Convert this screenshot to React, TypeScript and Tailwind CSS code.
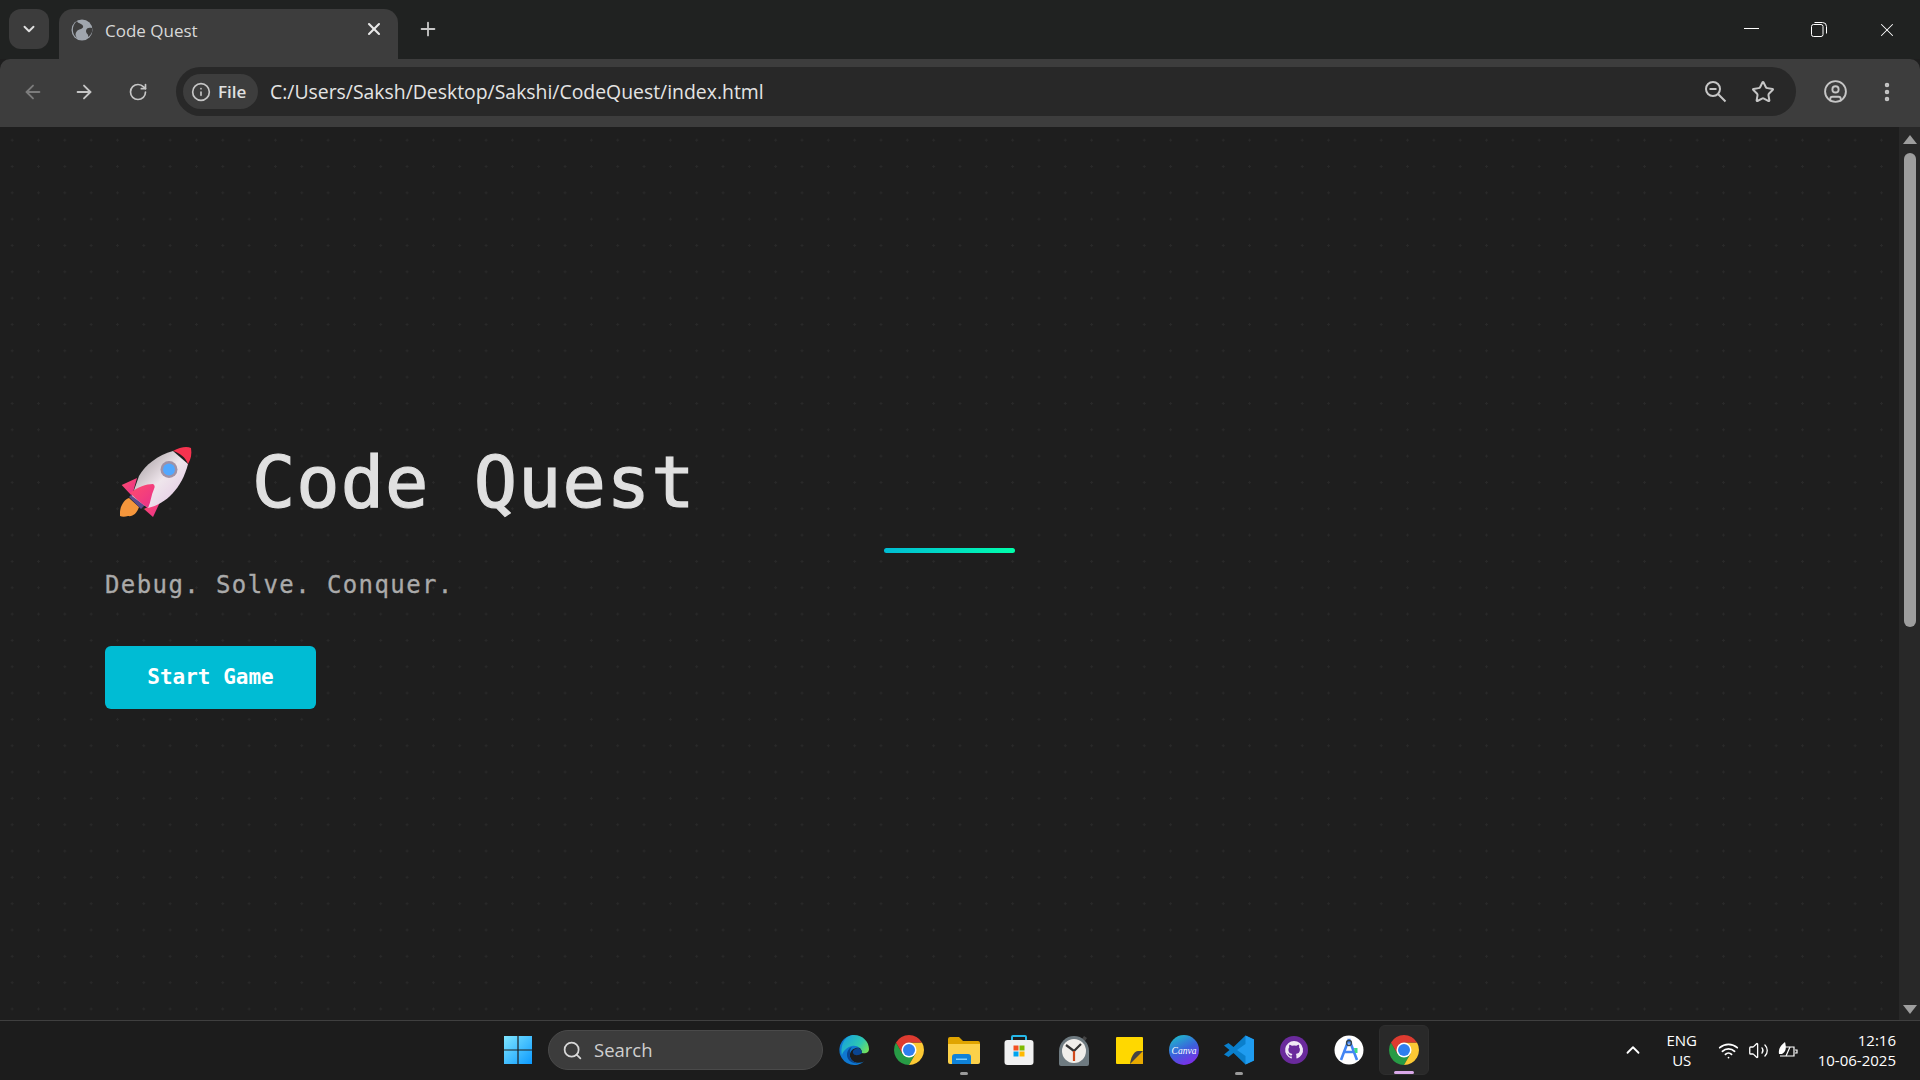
import type { ReactNode } from "react";
import {
  ArrowLeft,
  ArrowRight,
  ChevronDown,
  ChevronUp,
  CircleUser,
  EllipsisVertical,
  Info,
  Plus,
  RotateCw,
  Search,
  Star,
  Volume2,
  Wifi,
  X,
} from "lucide-react";

const UI_FONT = "font-['Open_Sans','Noto_Sans',sans-serif]";
const MONO_FONT = "font-['DejaVu_Sans_Mono','Liberation_Mono',monospace]";

function Rocket() {
  return (
    <svg width="72" height="72" viewBox="0 0 72 72" className="shrink-0">
      <defs>
        <linearGradient id="body" x1="0.2" y1="0.2" x2="0.9" y2="0.9">
          <stop offset="0" stopColor="#b8b0b4" />
          <stop offset="0.45" stopColor="#efe6ec" />
          <stop offset="1" stopColor="#e4c8e4" />
        </linearGradient>
        <linearGradient id="fin" x1="0" y1="0" x2="1" y2="1">
          <stop offset="0" stopColor="#ff4d6d" />
          <stop offset="1" stopColor="#e8308c" />
        </linearGradient>
      </defs>
      <path d="M1.7 39 L17 32 L12 50 Z" fill="url(#fin)" />
      <path d="M33 71 L41 54 L24 63 Z" fill="url(#fin)" />
      <path d="M0 70 C-1 60 5 53 9 52 L19 61 C17 67 13 71 8 70 C5 71 2 71 0 70 Z" fill="#f5963c" />
      <path d="M9 51 L13 47 L26 58 L21 63 Z" fill="#5b4a8c" />
      <path d="M53 5 C38 9 25 19 19 30 L12 50 L28 62 C46 58 62 42 68 18 Z" fill="url(#body)" />
      <path d="M53 5 C60 1 67 0 71 2 C72 8 71 13 68 18 C65 11 60 7 53 5 Z" fill="#f6334f" />
      <path d="M10 47 C18 41 26 38 33 38 C35 39 35 41 34 43 C31 49 31 56 28 62 C22 58 15 52 10 47 Z" fill="url(#fin)" />
      <circle cx="49" cy="23.5" r="8.5" fill="#a092a6" />
      <circle cx="49" cy="23.5" r="6" fill="#52a8ff" />
    </svg>
  );
}

function ChromeLogo() {
  return (
    <svg width="30" height="30" viewBox="4 4 40 40">
      <path d="M6.68 14A20 20 0 0 0 24 44L32.66 29 15.34 29Z" fill="#279b45" />
      <path d="M41.32 14A20 20 0 0 1 24 44L32.66 29 24 14Z" fill="#fcc934" />
      <path d="M6.68 14A20 20 0 0 1 41.32 14H24L15.34 29Z" fill="#dd3b30" />
      <circle cx="24" cy="24" r="10" fill="#fff" />
      <circle cx="24" cy="24" r="8" fill="#2f7fee" />
    </svg>
  );
}

function WindowsLogo() {
  return (
    <svg width="30" height="30" viewBox="0 0 30 30">
      <defs>
        <linearGradient id="win" x1="0" y1="0" x2="1" y2="1">
          <stop offset="0" stopColor="#7fe6ff" />
          <stop offset="1" stopColor="#0c9aff" />
        </linearGradient>
      </defs>
      <path d="M1 1h13.4v13.4H1zM15.6 1H29v13.4H15.6zM1 15.6h13.4V29H1zM15.6 15.6H29V29H15.6z" fill="url(#win)" />
    </svg>
  );
}

function EdgeLogo() {
  return (
    <svg width="30" height="30" viewBox="0 0 30 30">
      <defs>
        <linearGradient id="edgeA" x1="0.1" y1="0.2" x2="1" y2="0.7">
          <stop offset="0" stopColor="#1aa6d8" />
          <stop offset="0.6" stopColor="#2fc8b0" />
          <stop offset="1" stopColor="#74e05c" />
        </linearGradient>
      </defs>
      <path d="M15 0A15 15 0 1 0 25 26.500C18 30 10 26 11 19C12 14 17 12 21 13L15 0Z" fill="#0f78d0" />
      <path d="M15 0C24 0 30 7 30 14C30 18 26 19 23 18C23 13 18 10 13 11C8 12 4 16 3 20C1 10 6 0 15 0Z" fill="url(#edgeA)" />
      <path d="M23 18C20 21 15 21 14 18C13 15 17 13 20 13C22 14 23 16 23 18ZM11 19C10 24 14 27 19 28.500C13 29 8 25 8 20C8 16 10 13 13 12C11 14 11 16 11 19Z" fill="#0a4590" />
    </svg>
  );
}

function FolderLogo() {
  return (
    <svg width="32" height="30" viewBox="0 0 32 30">
      <path d="M0 4a2 2 0 0 1 2-2h9l4 4h15a2 2 0 0 1 2 2v4H0Z" fill="#e0a400" />
      <path d="M0 9h32v18a2 2 0 0 1-2 2H2a2 2 0 0 1-2-2Z" fill="#fcd14a" />
      <path d="M4 22a3 3 0 0 1 3-3h13a3 3 0 0 1 3 3v7H4Z" fill="#0f82d8" />
      <path d="M8 23.5h11v1.5H8z" fill="#7fd0ff" />
    </svg>
  );
}

function StoreLogo() {
  return (
    <svg width="30" height="30" viewBox="0 0 30 30">
      <path d="M8 5V2a1 1 0 0 1 1-1h12a1 1 0 0 1 1 1v3" fill="none" stroke="#26b8e8" strokeWidth="2" />
      <rect x="0.5" y="5" width="29" height="25" rx="3" fill="#f1f1f1" />
      <path d="M9.5 10.5h5v5h-5z" fill="#f25022" />
      <path d="M15.5 10.5h5v5h-5z" fill="#7fba00" />
      <path d="M9.5 16.5h5v5h-5z" fill="#00a4ef" />
      <path d="M15.5 16.5h5v5h-5z" fill="#ffb900" />
    </svg>
  );
}

function ClockLogo() {
  return (
    <svg width="30" height="31" viewBox="0 0 30 31">
      <path d="M25 1l3 2-2 3-3-2Z" fill="#444" />
      <path d="M0 16a15 15 0 0 1 30 0v13a2 2 0 0 1-2 2H2a2 2 0 0 1-2-2Z" fill="#6e7a80" />
      <circle cx="15" cy="16" r="12" fill="#f0eeea" />
      <path d="M15 16L7 10M15 16L22 9" stroke="#333" strokeWidth="2.2" />
      <path d="M15 16v10" stroke="#d04a1c" strokeWidth="2.2" />
    </svg>
  );
}

function StickyLogo() {
  return (
    <svg width="27" height="27" viewBox="0 0 27 27">
      <path d="M1 0h25a1 1 0 0 1 1 1v25a1 1 0 0 1-1 1H1a1 1 0 0 1-1-1V1a1 1 0 0 1 1-1Z" fill="#ffd800" />
      <path d="M14 27c1-6 3-12 8-13h5v12a1 1 0 0 1-1 1Z" fill="#e8aa00" />
      <path d="M14 27c1-6 3-12 8-13h5Z" fill="#444" />
    </svg>
  );
}

function CanvaLogo() {
  return (
    <svg width="30" height="30" viewBox="0 0 30 30">
      <defs>
        <linearGradient id="canva" x1="0.1" y1="0" x2="0.6" y2="1">
          <stop offset="0" stopColor="#1cc4c9" />
          <stop offset="0.55" stopColor="#3b62dc" />
          <stop offset="1" stopColor="#7b2fe8" />
        </linearGradient>
      </defs>
      <circle cx="15" cy="15" r="15" fill="url(#canva)" />
      <text x="15" y="18.5" textAnchor="middle" fontSize="9.5" fontStyle="italic" fontFamily="Liberation Serif, serif" fill="#fff">
        Canva
      </text>
    </svg>
  );
}

function VsCodeLogo() {
  return (
    <svg width="30" height="30" viewBox="0 0 30 30">
      <path d="M21.5 0.5L30 4.5v21l-8.500 4-12-11.500-5 4L0 19.500 5.500 15 0 10.500l4.500-2.500 5 4Z" fill="#0a7fcc" />
      <path d="M21.500 0.500L30 4.500v21l-8.500 4V21L13 15l8.500-6Z" fill="#1f9cf0" />
    </svg>
  );
}

function GithubLogo() {
  return (
    <svg width="28" height="28" viewBox="0 0 28 28">
      <circle cx="14" cy="14" r="14" fill="#6a2a9c" />
      <path
        d="M14 5a9 9 0 0 0-2.800 17.500c.4.100.6-.2.600-.4v-1.600c-2.500.5-3-1.100-3-1.100-.4-1-1-1.300-1-1.300-.8-.6.100-.6.100-.6.900.100 1.400.9 1.400.9.800 1.400 2.100 1 2.600.8.100-.6.300-1 .6-1.200-2-.2-4.100-1-4.100-4.400 0-1 .3-1.800.9-2.400-.1-.2-.4-1.100.100-2.400 0 0 .8-.2 2.500.9a8.700 8.700 0 0 1 4.500 0c1.700-1.100 2.500-.9 2.500-.9.500 1.300.2 2.200.1 2.400.6.600.9 1.400.9 2.400 0 3.400-2.100 4.200-4.100 4.400.3.300.6.800.6 1.700v2.400c0 .2.200.5.600.4A9 9 0 0 0 14 5Z"
        fill="#f0e8f6"
      />
    </svg>
  );
}

function StudioLogo() {
  return (
    <svg width="30" height="30" viewBox="0 0 30 30">
      <circle cx="15" cy="15" r="14.500" fill="#fff" />
      <path d="M15 4L7 25M15 4l8 21M9 17h12" stroke="#4285f4" strokeWidth="2.600" fill="none" />
      <circle cx="15" cy="8" r="2.500" fill="none" stroke="#37474f" strokeWidth="1.300" />
      <path d="M20 13h3.500v5H21Z" fill="#3ddc84" />
    </svg>
  );
}

function BatteryLeaf() {
  return (
    <svg width="20" height="20" viewBox="0 0 20 20" fill="none" stroke="#fff" strokeWidth="1.200">
      <path d="M5 7h11v9H2" />
      <path d="M17 10h2v3h-2" />
      <path d="M1 14c-1-5 2-9 6-12 1 4 2 9-3 12Z" fill="#fff" stroke="none" />
      <path d="M8 16l4-9" />
    </svg>
  );
}

function TaskIcon({ children, mark }: { children: ReactNode; mark?: boolean }) {
  return (
    <div className="relative flex h-[50px] w-[50px] items-center justify-center">
      {children}
      {mark && <div className="absolute bottom-0 left-[21px] h-[3px] w-[8px] rounded-full bg-[#9a9a9a]" />}
    </div>
  );
}

function BrowserChrome() {
  return (
    <>
      <div className="flex h-[59px] items-start bg-[#202221] pt-[9px] pl-[9px] text-[#e0e0e0]">
        <div className="flex h-[40px] w-[40px] items-center justify-center rounded-[12px] bg-[#3c3c3c]">
          <ChevronDown size={18} strokeWidth={2.500} />
        </div>
        <div className="ml-[10px] flex h-[50px] w-[339px] items-start rounded-t-[14px] bg-[#3d3d3d] pt-[10px] pr-[14px] pl-[12px]">
          <svg width="22" height="22" viewBox="0 0 22 22" className="shrink-0">
            <circle cx="11" cy="11" r="10.500" fill="#a0a6ae" />
            <path d="M6 2c1 3 5 2 6 5s-4 3-6 5-2 5 0 7C1 16 0 7 6 2ZM21 9c-3-1-6 0-6 3s3 3 2 6c3-2 5-5 4-9Z" fill="#3d3d3d" />
          </svg>
          <span className={`${UI_FONT} ml-[12px] text-[17px] leading-[24px] text-[#d8d8d8]`}>Code Quest</span>
          <X size={20} strokeWidth={2.500} className="ml-auto text-[#e8e8e8]" />
        </div>
        <Plus size={22} strokeWidth={2} className="ml-[19px] mt-[9px] text-[#c8c8c8]" />
        <div className="ml-auto flex items-start pt-[12px] pr-[22px] text-white">
          <div className="mt-[7px] h-px w-[15px] bg-white" />
          <svg width="16" height="16" viewBox="0 0 16 16" fill="none" stroke="#fff" className="ml-[52px]">
            <rect x="0.500" y="3.500" width="11.500" height="12" rx="2" />
            <path d="M3.500 1.500h8a4 4 0 0 1 4 4v7" />
          </svg>
          <X size={22} strokeWidth={1.100} className="ml-[49px] -mt-[2px]" />
        </div>
      </div>
      <div className="flex h-[68px] items-center rounded-t-[10px] bg-[#3d3d3d] pb-[3px] pl-[22px] text-[#c6c6c6]">
        <ArrowLeft size={22} strokeWidth={2} className="text-[#7c7c7c]" />
        <ArrowRight size={22} strokeWidth={2} className="ml-[29px]" />
        <RotateCw size={20} strokeWidth={2} className="ml-[33px]" />
        <div className="ml-[28px] flex h-[49px] w-[1620px] items-center rounded-full bg-[#282828] pl-[7px] pr-[21px]">
          <div className="flex h-[35px] w-[75px] items-center rounded-full bg-[#3d3d3d] pl-[8px]">
            <Info size={20} strokeWidth={2} />
            <span className={`${UI_FONT} ml-[7px] text-[17px] font-semibold text-[#e0e0e0]`}>File</span>
          </div>
          <span className={`${UI_FONT} ml-[12px] text-[19.400px] text-[#e4e4e4]`}>
            C:/Users/Saksh/Desktop/Sakshi/CodeQuest/index.html
          </span>
          <svg width="23" height="23" viewBox="0 0 23 23" fill="none" stroke="currentColor" strokeWidth="2" className="ml-auto">
            <circle cx="9" cy="9" r="7" />
            <path d="M14 14l7.500 7.500M5.500 9h7" />
          </svg>
          <Star size={24} strokeWidth={2} className="ml-[24px]" />
        </div>
        <CircleUser size={25} strokeWidth={1.800} className="ml-[27px]" />
        <EllipsisVertical size={24} strokeWidth={2.500} className="ml-[27px]" />
      </div>
    </>
  );
}

function Scrollbar() {
  return (
    <div className="flex w-[21px] flex-col items-center bg-[#282828] pt-[8px] pb-[6px]">
      <div className="h-0 w-0 border-x-[7px] border-b-[9px] border-x-transparent border-b-[#9e9e9e]" />
      <div className="mt-[9px] h-[474px] w-[12px] rounded-full bg-[#9e9e9e]" />
      <div className="mt-auto h-0 w-0 border-x-[7px] border-t-[9px] border-x-transparent border-t-[#9e9e9e]" />
    </div>
  );
}

function Hero() {
  return (
    <main className="flex flex-1 bg-[#1e1e1e] bg-[radial-gradient(circle,#292929_1.100px,transparent_1.300px)] bg-[size:26.330px_26.330px] bg-[position:-1px_0px] pl-[105px] pt-[316px]">
      <div className="w-[779px]">
        <h1 className={`${MONO_FONT} flex h-[78px] items-center text-[72px] font-normal tracking-[1px] text-[#e0e0e0] [-webkit-text-stroke:1.200px_#e0e0e0]`}>
          <span className="ml-[15px] mr-[60px]">
            <Rocket />
          </span>
          Code Quest
        </h1>
        <p className={`${MONO_FONT} mt-[48px] text-[24px] leading-[32px] tracking-[1.400px] text-[#aaaaaa] [-webkit-text-stroke:0.300px_#aaaaaa]`}>
          Debug. Solve. Conquer.
        </p>
        <button
          type="button"
          className={`${MONO_FONT} mt-[45px] h-[63px] w-[211px] rounded-[6px] bg-[#00bcd4] text-[21px] font-bold text-white`}
        >
          Start Game
        </button>
      </div>
      <div className="mt-[105px] h-[5px] w-[131px] rounded-full bg-gradient-to-r from-[#00bcd4] to-[#00ffaa]" />
    </main>
  );
}

function Taskbar() {
  return (
    <div className={`${UI_FONT} flex h-[60px] items-center border-t border-[#3f3f3f] bg-[#1c1c1c] pb-[1px] pl-[503px] text-white`}>
      <WindowsLogo />
      <div className="ml-[15px] flex h-[40px] w-[275px] items-center rounded-full border border-[#4a4a4a] bg-[#3c3c3c] pl-[13px]">
        <Search size={21} strokeWidth={2} className="text-[#d8d8d8]" />
        <span className="ml-[11px] text-[18.500px] text-[#cfcfcf]">Search</span>
      </div>
      <div className="ml-[6px] flex gap-[5px]">
        <TaskIcon><EdgeLogo /></TaskIcon>
        <TaskIcon><ChromeLogo /></TaskIcon>
        <TaskIcon mark><FolderLogo /></TaskIcon>
        <TaskIcon><StoreLogo /></TaskIcon>
        <TaskIcon><ClockLogo /></TaskIcon>
        <TaskIcon><StickyLogo /></TaskIcon>
        <TaskIcon><CanvaLogo /></TaskIcon>
        <TaskIcon mark><VsCodeLogo /></TaskIcon>
        <TaskIcon><GithubLogo /></TaskIcon>
        <TaskIcon><StudioLogo /></TaskIcon>
        <div className="relative flex h-[50px] w-[50px] items-center justify-center rounded-[6px] border border-[#2e2e2e] bg-[#292929]">
          <ChromeLogo />
          <div className="absolute bottom-0 left-[14px] h-[3px] w-[20px] rounded-full bg-[#d9a8e8]" />
        </div>
      </div>
      <div className="ml-auto flex items-center pr-[24px]">
        <ChevronUp size={22} strokeWidth={2} />
        <div className="ml-[20px] w-[36px] text-center text-[15px] leading-[20px]">
          ENG
          <br />
          US
        </div>
        <Wifi size={21} strokeWidth={2} className="ml-[18px]" />
        <Volume2 size={21} strokeWidth={1.500} className="ml-[9px]" />
        <div className="ml-[9px]">
          <BatteryLeaf />
        </div>
        <div className="ml-[20px] text-right text-[15px] leading-[20px]">
          12:16
          <br />
          10-06-2025
        </div>
      </div>
    </div>
  );
}

export default function App() {
  return (
    <div className="flex h-[1080px] w-[1920px] flex-col overflow-hidden bg-[#1e1e1e]">
      <BrowserChrome />
      <div className="flex min-h-0 flex-1">
        <Hero />
        <Scrollbar />
      </div>
      <Taskbar />
    </div>
  );
}
